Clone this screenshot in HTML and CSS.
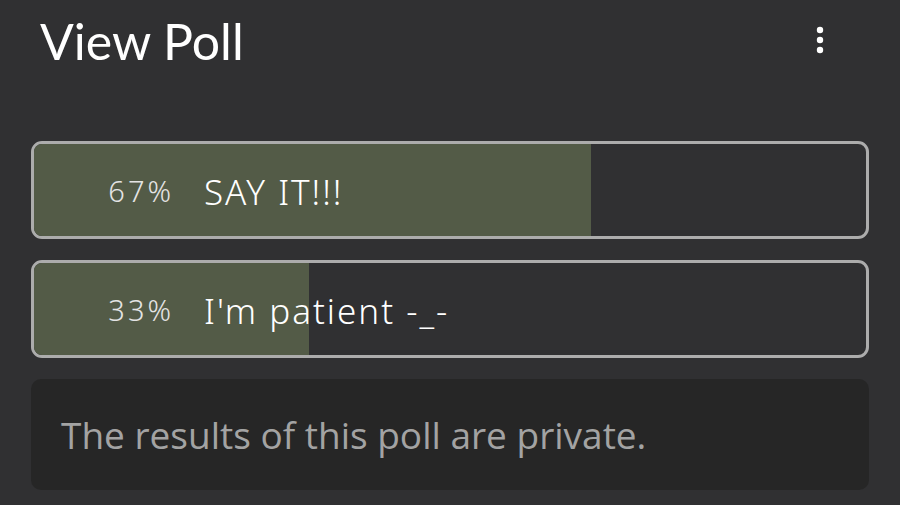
FILE: index.html
```html
<!DOCTYPE html>
<html lang="en">
<head>
  <meta charset="UTF-8">
  <meta name="viewport" content="width=device-width, initial-scale=1.0">
  <title>View Poll</title>
  <link rel="stylesheet" href="styles.css">
</head>
<body>
  <div id="header">
    <div class="title">View Poll</div>
    <button class="menu" aria-label="More options">
      <svg width="12" height="30" viewBox="0 0 12 30">
        <circle cx="6" cy="5" r="3.2" fill="#fff"/>
        <circle cx="6" cy="15" r="3.2" fill="#fff"/>
        <circle cx="6" cy="25" r="3.2" fill="#fff"/>
      </svg>
    </button>
  </div>

  <div id="options">
    <div class="option">
      <div class="fill" style="width: 67%"></div>
      <div class="label">
        <span class="percent">67%</span>
        <span class="answer">SAY IT!!!</span>
      </div>
    </div>
    <div class="option">
      <div class="fill" style="width: 33%"></div>
      <div class="label">
        <span class="percent">33%</span>
        <span class="answer">I'm patient -_-</span>
      </div>
    </div>
  </div>

  <div id="notice">The results of this poll are private.</div>
</body>
</html>
```

FILE: styles.css
```css
body {
  margin: 0;
  padding: 0;
  background-color: #303032;
  color: #fff;
  font-family: Lato, "Noto Sans", sans-serif;
}
#header {
  display: flex;
  align-items: center;
  justify-content: space-between;
  height: 84px;
  padding: 0 74px 0 40px;
}
#header .title {
  font-size: 50px;
  margin-top: -2px;
}
#header .menu {
  background: none;
  border: none;
  padding: 0;
  display: flex;
  margin-top: -4px;
}
#options {
  display: flex;
  flex-direction: column;
  gap: 21px;
  margin: 57px 31px 0 31px;
}
.option {
  position: relative;
  height: 92px;
  border: 3px solid #acacac;
  border-radius: 11px;
  overflow: hidden;
}
.option .fill {
  position: absolute;
  top: 0;
  left: 0;
  bottom: 0;
  background-color: #535b47;
}
.option .label {
  position: relative;
  display: flex;
  align-items: center;
  height: 100%;
  font-family: "Noto Sans", sans-serif;
  font-weight: 300;
}
.option .percent {
  width: 140px;
  text-align: right;
  font-size: 29px;
  letter-spacing: 3px;
  color: #e4e4e4;
}
.option .answer {
  margin-left: 30px;
  font-size: 35px;
  letter-spacing: 2px;
  color: #fff;
  margin-top: 2px;
}
#notice {
  margin: 21px 31px 0 31px;
  height: 111px;
  display: flex;
  align-items: center;
  padding-left: 30px;
  background-color: #262626;
  border-radius: 10px;
  font-family: "Open Sans", sans-serif;
  font-size: 37px;
  color: #a3a3a3;
}
```
